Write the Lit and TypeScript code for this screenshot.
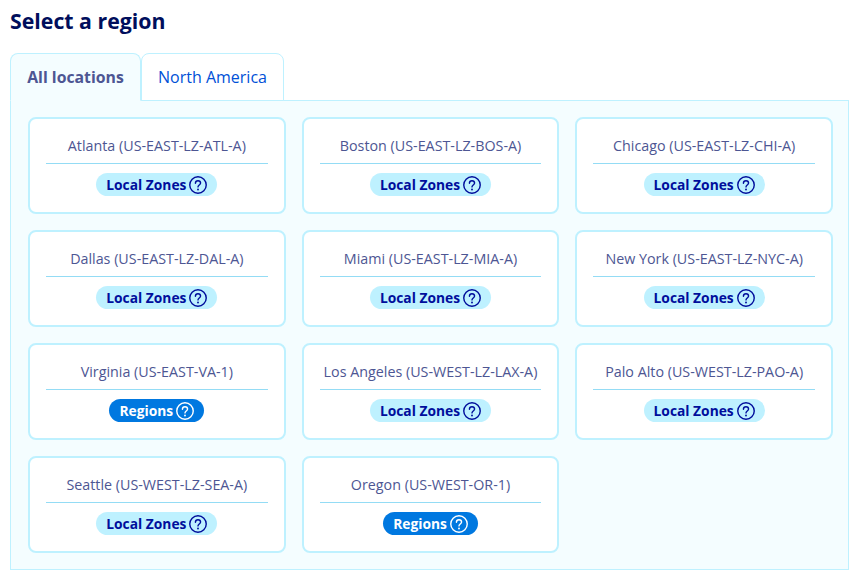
import { LitElement, html, css } from "lit";
import { customElement } from "lit/decorators.js";

const LOCAL = "Local Zones";
const REGION = "Regions";

const locations = [
  ["Atlanta (US-EAST-LZ-ATL-A)", LOCAL],
  ["Boston (US-EAST-LZ-BOS-A)", LOCAL],
  ["Chicago (US-EAST-LZ-CHI-A)", LOCAL],
  ["Dallas (US-EAST-LZ-DAL-A)", LOCAL],
  ["Miami (US-EAST-LZ-MIA-A)", LOCAL],
  ["New York (US-EAST-LZ-NYC-A)", LOCAL],
  ["Virginia (US-EAST-VA-1)", REGION],
  ["Los Angeles (US-WEST-LZ-LAX-A)", LOCAL],
  ["Palo Alto (US-WEST-LZ-PAO-A)", LOCAL],
  ["Seattle (US-WEST-LZ-SEA-A)", LOCAL],
  ["Oregon (US-WEST-OR-1)", REGION],
];

@customElement("app-root")
export class AppRoot extends LitElement {
  static styles = css`
    :host {
      display: block;
      height: 581px;
      box-sizing: border-box;
      padding: 6px 12px 0 10px;
      background: #fff;
      font-family: "Open Sans", "Noto Sans", sans-serif;
      color: #4d5693;
    }
    h1 {
      margin: 0 0 17px;
      font-size: 21.3px;
      line-height: 30px;
      font-weight: 700;
      color: #000e5c;
    }
    .tabs {
      display: flex;
      position: relative;
      z-index: 1;
      margin-bottom: -1px;
    }
    .tab {
      box-sizing: border-box;
      height: 48px;
      display: flex;
      align-items: center;
      justify-content: center;
      border: 1px solid #bef1ff;
      border-radius: 8px 8px 0 0;
      background: #fff;
      color: #0050d7;
      font-size: 16px;
    }
    .tab.first {
      width: 131px;
      background: #f4fdff;
      border-bottom-color: #f4fdff;
      color: #4d5693;
      font-size: 15.8px;
      font-weight: 700;
    }
    .tab.second {
      width: 143px;
    }
    .panel {
      box-sizing: border-box;
      height: 470px;
      padding: 16px 15px 16px 17px;
      border: 1px solid #bef1ff;
      background: #f4fdff;
      display: grid;
      grid-template-columns: repeat(3, 1fr);
      grid-auto-rows: 97px;
      gap: 16px;
    }
    .card {
      box-sizing: border-box;
      padding: 0 16px;
      border: 2px solid #bef1ff;
      border-radius: 8px;
      background: #fff;
      display: flex;
      flex-direction: column;
      align-items: center;
    }
    .name {
      box-sizing: border-box;
      align-self: stretch;
      height: 45px;
      padding-top: 8px;
      display: flex;
      align-items: center;
      justify-content: center;
      border-bottom: 1px solid #94dcf5;
      font-size: 14.3px;
      white-space: nowrap;
    }
    .badge {
      margin-top: 9px;
      height: 23px;
      padding: 0 10px;
      display: flex;
      align-items: center;
      gap: 3px;
      border-radius: 12px;
      font-size: 13.8px;
      font-weight: 700;
      white-space: nowrap;
    }
    .badge.local {
      background: #bef1ff;
      color: #000e9c;
    }
    .badge.region {
      background: #0078e0;
      color: #fff;
    }
    svg {
      width: 18px;
      height: 18px;
      flex: none;
    }
  `;

  help() {
    return html`<svg viewBox="0 0 19 19" fill="none" stroke="currentColor" stroke-width="1.5">
      <circle cx="9.5" cy="9.5" r="8.7"></circle>
      <path d="M6.8 7.6c0-1.6 1.2-2.6 2.7-2.6s2.7 1 2.7 2.4c0 2.1-2.7 2.1-2.7 4.1" stroke-linecap="round"></path>
      <circle cx="9.5" cy="14.2" r="1" fill="currentColor" stroke="none"></circle>
    </svg>`;
  }

  render() {
    return html`
      <h1>Select a region</h1>
      <div class="tabs">
        <div class="tab first">All locations</div>
        <div class="tab second">North America</div>
      </div>
      <div class="panel">
        ${locations.map(
          ([name, type]) => html`
            <div class="card">
              <div class="name">${name}</div>
              <div class="badge ${type === LOCAL ? "local" : "region"}">${type}${this.help()}</div>
            </div>
          `
        )}
      </div>
    `;
  }
}
